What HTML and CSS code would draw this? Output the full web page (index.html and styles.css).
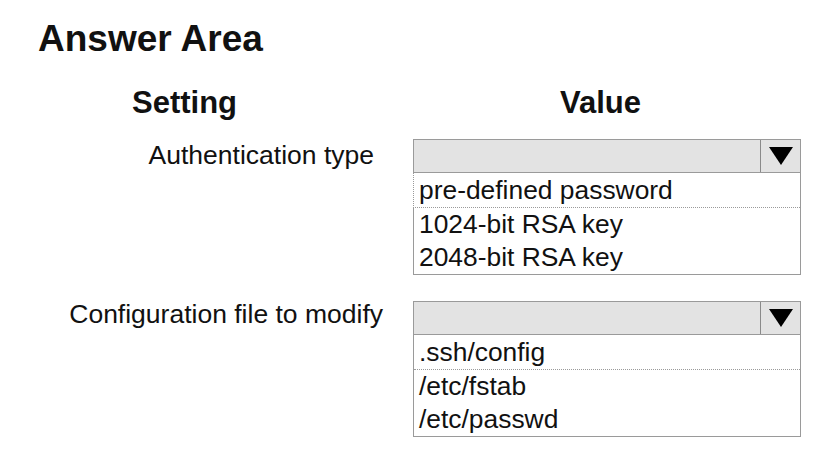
FILE: index.html
```html
<!DOCTYPE html>
<html lang="en">
<head>
<meta charset="utf-8">
<title>Answer Area</title>
<link rel="stylesheet" href="styles.css">
</head>
<body>
<div class="page">
  <h1 class="title">Answer Area</h1>
  <div class="grid">
    <div class="col-head setting-head">Setting</div>
    <div class="col-head value-head">Value</div>

    <div class="label label-auth">Authentication type</div>
    <div class="dropdown">
      <div class="dd-head">
        <div class="dd-field"></div>
        <div class="dd-btn"><span class="tri"></span></div>
      </div>
      <div class="dd-list">
        <div class="dd-item first focus">pre-defined password</div>
        <div class="dd-item">1024-bit RSA key</div>
        <div class="dd-item">2048-bit RSA key</div>
      </div>
    </div>

    <div class="label label-config">Configuration file to modify</div>
    <div class="dropdown">
      <div class="dd-head">
        <div class="dd-field"></div>
        <div class="dd-btn"><span class="tri"></span></div>
      </div>
      <div class="dd-list">
        <div class="dd-item first">.ssh/config</div>
        <div class="dd-item">/etc/fstab</div>
        <div class="dd-item">/etc/passwd</div>
      </div>
    </div>
  </div>
</div>
</body>
</html>
```

FILE: styles.css
```css
html, body {
  margin: 0;
  padding: 0;
  background: #ffffff;
}

body {
  font-family: "Liberation Sans", Arial, sans-serif;
  color: #111111;
}

.page {
  padding-top: 20px;
}

.title {
  margin: 0 0 0 38px;
  font-size: 37px;
  line-height: 37px;
  font-weight: bold;
}

.grid {
  display: grid;
  grid-template-columns: 413px 388px;
  row-gap: 26px;
  margin-top: 31px;
}

.col-head {
  font-size: 31px;
  line-height: 30px;
  font-weight: bold;
  margin-bottom: -5px;
}

.setting-head {
  padding-left: 132px;
}

.value-head {
  padding-left: 147px;
}

.label {
  font-size: 26.5px;
  line-height: 26px;
  text-align: right;
  padding-top: 3px;
}

.label-auth {
  padding-right: 39px;
}

.label-config {
  padding-right: 30px;
  padding-top: 0;
}

.dropdown {
  border: 1px solid #9a9a9a;
  background: #ffffff;
}

.dd-head {
  display: flex;
  height: 32px;
  background: #e3e3e3;
  border-bottom: 1px solid #9a9a9a;
}

.dd-field {
  flex: 1;
}

.dd-btn {
  width: 39px;
  border-left: 1px solid #8a8a8a;
  display: flex;
  align-items: center;
  justify-content: center;
}

.tri {
  width: 0;
  height: 0;
  border-left: 12px solid transparent;
  border-right: 12px solid transparent;
  border-top: 18px solid #000000;
}

.dd-list {
  display: flex;
  flex-direction: column;
}

.dd-item {
  height: 33px;
  line-height: 33px;
  font-size: 26.4px;
  padding-left: 5px;
  white-space: nowrap;
}

.dd-item.first {
  height: 34px;
  line-height: 34px;
  border-bottom: 1px dotted #9a9a9a;
}

.dd-item.focus {
  margin-left: -1px;
  border-left: 1px dotted #9a9a9a;
  background: #ffffff;
}
```
